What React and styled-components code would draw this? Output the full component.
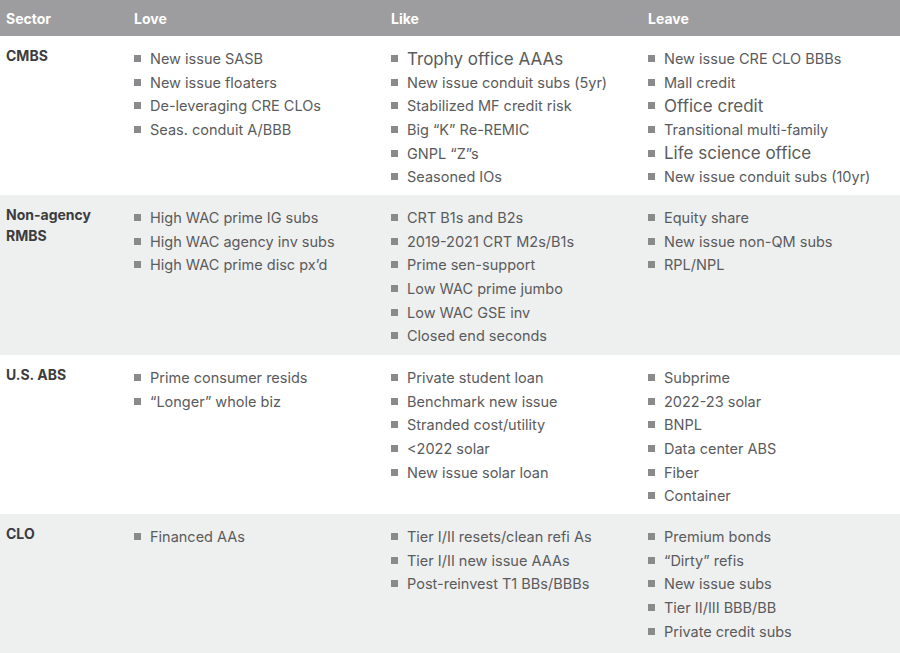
import React from 'react';
import styled, { createGlobalStyle } from 'styled-components';

const GlobalStyle = createGlobalStyle`
  body {
    margin: 0;
    background: #fff;
    font-family: Inter, "Open Sans", "Liberation Sans", sans-serif;
  }
`;

const rows = [
  {
    sector: ['CMBS'],
    love: ['New issue SASB', 'New issue floaters', 'De-leveraging CRE CLOs', 'Seas. conduit A/BBB'],
    like: [['Trophy office AAAs', true], 'New issue conduit subs (5yr)', 'Stabilized MF credit risk', 'Big \u201CK\u201D Re-REMIC', 'GNPL \u201CZ\u201Ds', 'Seasoned IOs'],
    leave: ['New issue CRE CLO BBBs', 'Mall credit', ['Office credit', true], 'Transitional multi-family', ['Life science office', true], 'New issue conduit subs (10yr)'],
  },
  {
    sector: ['Non-agency', 'RMBS'],
    love: ['High WAC prime IG subs', 'High WAC agency inv subs', 'High WAC prime disc px\u2019d'],
    like: ['CRT B1s and B2s', '2019-2021 CRT M2s/B1s', 'Prime sen-support', 'Low WAC prime jumbo', 'Low WAC GSE inv', 'Closed end seconds'],
    leave: ['Equity share', 'New issue non-QM subs', 'RPL/NPL'],
  },
  {
    sector: ['U.S. ABS'],
    love: ['Prime consumer resids', '\u201CLonger\u201D whole biz'],
    like: ['Private student loan', 'Benchmark new issue', 'Stranded cost/utility', '<2022 solar', 'New issue solar loan'],
    leave: ['Subprime', '2022-23 solar', 'BNPL', 'Data center ABS', 'Fiber', 'Container'],
  },
  {
    sector: ['CLO'],
    love: ['Financed AAs'],
    like: ['Tier I/II resets/clean refi As', 'Tier I/II new issue AAAs', 'Post-reinvest T1 BBs/BBBs'],
    leave: ['Premium bonds', '\u201CDirty\u201D refis', 'New issue subs', 'Tier II/III BBB/BB', 'Private credit subs'],
  },
];

const Table = styled.div`
  width: 900px;
  display: grid;
  grid-template-columns: 128px 257px 257px 258px;
  grid-template-rows: 36px 159px 160px 159px 139px;
`;

const HeadCell = styled.div`
  background: #9d9d9f;
  color: #fff;
  font-weight: 700;
  font-size: 14px;
  line-height: 38px;
  padding-left: 6px;
`;

const Cell = styled.div`
  background: ${p => (p.$shaded ? '#eeefef' : '#fff')};
  padding: 11px 6px 0;
`;

const SectorName = styled.div`
  font-weight: 700;
  font-size: 14px;
  color: #3c3c3e;
  line-height: 23.6px;
  margin-top: -3px;
`;

const List = styled.ul`
  list-style: none;
  margin: 0;
  padding: 0;
`;

const Item = styled.li`
  display: flex;
  align-items: center;
  height: 23.6px;
  color: #5a5b5d;
  font-size: ${p => (p.$big ? '17px' : '14.5px')};
  white-space: nowrap;
  &::before {
    content: '';
    width: 7px;
    height: 7px;
    background: #8a8a8c;
    margin-right: 9px;
    flex: none;
  }
`;

function Items({ list }) {
  return (
    <List>
      {list.map(entry => {
        const [text, big] = Array.isArray(entry) ? entry : [entry, false];
        return (
          <Item key={text} $big={big}>
            {text}
          </Item>
        );
      })}
    </List>
  );
}

export default function App() {
  return (
    <>
      <GlobalStyle />
      <Table>
        <HeadCell>Sector</HeadCell>
        <HeadCell>Love</HeadCell>
        <HeadCell>Like</HeadCell>
        <HeadCell>Leave</HeadCell>
        {rows.map((r, i) => {
          const shaded = i % 2 === 1;
          return (
            <React.Fragment key={r.sector[0]}>
              <Cell $shaded={shaded}>
                {r.sector.map(s => (
                  <SectorName key={s}>{s}</SectorName>
                ))}
              </Cell>
              <Cell $shaded={shaded}>
                <Items list={r.love} />
              </Cell>
              <Cell $shaded={shaded}>
                <Items list={r.like} />
              </Cell>
              <Cell $shaded={shaded}>
                <Items list={r.leave} />
              </Cell>
            </React.Fragment>
          );
        })}
      </Table>
    </>
  );
}
